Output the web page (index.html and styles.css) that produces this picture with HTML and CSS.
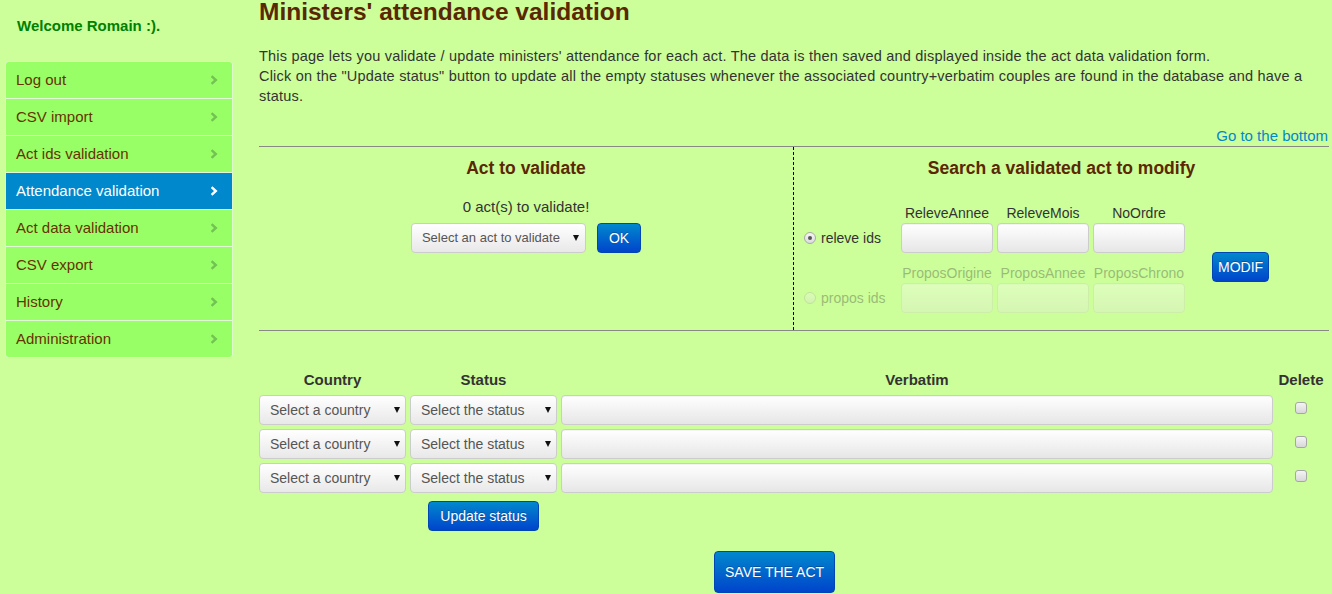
FILE: index.html
```html
<!DOCTYPE html>
<html>
<head>
<meta charset="utf-8">
<title>Ministers' attendance validation</title>
<link rel="stylesheet" href="styles.css">
</head>
<body>
<div class="layout">
  <aside class="sidebar">
    <p class="welcome">Welcome Romain :).</p>
    <ul class="nav">
      <li><a href="#">Log out<svg class="chev" width="8" height="10" viewBox="0 0 8 10"><path d="M1.6 1.2 L5.8 5 L1.6 8.8" fill="none" stroke="currentColor" stroke-width="2.4"/></svg></a></li>
      <li><a href="#">CSV import<svg class="chev" width="8" height="10" viewBox="0 0 8 10"><path d="M1.6 1.2 L5.8 5 L1.6 8.8" fill="none" stroke="currentColor" stroke-width="2.4"/></svg></a></li>
      <li><a href="#">Act ids validation<svg class="chev" width="8" height="10" viewBox="0 0 8 10"><path d="M1.6 1.2 L5.8 5 L1.6 8.8" fill="none" stroke="currentColor" stroke-width="2.4"/></svg></a></li>
      <li class="active"><a href="#">Attendance validation<svg class="chev" width="8" height="10" viewBox="0 0 8 10"><path d="M1.6 1.2 L5.8 5 L1.6 8.8" fill="none" stroke="currentColor" stroke-width="2.4"/></svg></a></li>
      <li><a href="#">Act data validation<svg class="chev" width="8" height="10" viewBox="0 0 8 10"><path d="M1.6 1.2 L5.8 5 L1.6 8.8" fill="none" stroke="currentColor" stroke-width="2.4"/></svg></a></li>
      <li><a href="#">CSV export<svg class="chev" width="8" height="10" viewBox="0 0 8 10"><path d="M1.6 1.2 L5.8 5 L1.6 8.8" fill="none" stroke="currentColor" stroke-width="2.4"/></svg></a></li>
      <li><a href="#">History<svg class="chev" width="8" height="10" viewBox="0 0 8 10"><path d="M1.6 1.2 L5.8 5 L1.6 8.8" fill="none" stroke="currentColor" stroke-width="2.4"/></svg></a></li>
      <li><a href="#">Administration<svg class="chev" width="8" height="10" viewBox="0 0 8 10"><path d="M1.6 1.2 L5.8 5 L1.6 8.8" fill="none" stroke="currentColor" stroke-width="2.4"/></svg></a></li>
    </ul>
  </aside>

  <main class="main">
    <h3 class="title">Ministers' attendance validation</h3>
    <p class="intro">This page lets you validate / update ministers' attendance for each act. The data is then saved and displayed inside the act data validation form.<br>Click on the "Update status" button to update all the empty statuses whenever the associated country+verbatim couples are found in the database and have a status.</p>
    <div class="goto"><a href="#">Go to the bottom</a></div>

    <div class="search">
      <section class="col col-left">
        <h4 class="subtitle">Act to validate</h4>
        <p class="count">0 act(s) to validate!</p>
        <div class="act-row">
          <div class="sel sel-act"><span>Select an act to validate</span><i class="caret"></i></div>
          <button class="btn btn-ok">OK</button>
        </div>
      </section>
      <section class="col col-right">
        <h4 class="subtitle">Search a validated act to modify</h4>
        <div class="ids">
          <span class="lbl r1 c2">ReleveAnnee</span>
          <span class="lbl r1 c3">ReleveMois</span>
          <span class="lbl r1 c4">NoOrdre</span>
          <label class="radio-lbl r2 c1"><span class="radio on"></span>releve ids</label>
          <span class="inp r2 c2"></span>
          <span class="inp r2 c3"></span>
          <span class="inp r2 c4"></span>
          <span class="lbl dis r4 c2">ProposOrigine</span>
          <span class="lbl dis r4 c3">ProposAnnee</span>
          <span class="lbl dis r4 c4">ProposChrono</span>
          <label class="radio-lbl dis r5 c1"><span class="radio"></span>propos ids</label>
          <span class="inp dis r5 c2"></span>
          <span class="inp dis r5 c3"></span>
          <span class="inp dis r5 c4"></span>
          <button class="btn btn-modif">MODIF</button>
        </div>
      </section>
    </div>

    <div class="attendance">
      <div class="th">Country</div>
      <div class="th">Status</div>
      <div class="th">Verbatim</div>
      <div class="th">Delete</div>

      <div class="sel"><span>Select a country</span><i class="caret"></i></div>
      <div class="sel"><span>Select the status</span><i class="caret"></i></div>
      <div class="inp"></div>
      <div class="chk-cell"><span class="chk"></span></div>

      <div class="sel"><span>Select a country</span><i class="caret"></i></div>
      <div class="sel"><span>Select the status</span><i class="caret"></i></div>
      <div class="inp"></div>
      <div class="chk-cell"><span class="chk"></span></div>

      <div class="sel"><span>Select a country</span><i class="caret"></i></div>
      <div class="sel"><span>Select the status</span><i class="caret"></i></div>
      <div class="inp"></div>
      <div class="chk-cell"><span class="chk"></span></div>

      <div class="update-cell"><button class="btn btn-update">Update status</button></div>
    </div>

    <div class="save-row"><button class="btn btn-save">SAVE THE ACT</button></div>
  </main>
</div>
</body>
</html>
```

FILE: styles.css
```css
* { box-sizing: border-box; }

body {
  margin: 0;
  background: #ccff99;
  font-family: "Liberation Sans", Arial, sans-serif;
  font-size: 14px;
  line-height: 20px;
  color: #333;
  overflow: hidden;
}

.layout {
  display: flex;
  gap: 26px;
  padding: 0 3px 0 5px;
}

/* Sidebar */
.sidebar {
  width: 228px;
  flex: none;
}

.welcome {
  margin: 16px 0 25px 12px;
  font-size: 15px;
  font-weight: bold;
  color: #008000;
}

.nav {
  list-style: none;
  margin: 0;
  padding: 0;
  border: 1px solid #def7cf;
  border-radius: 4px;
  overflow: hidden;
}

.nav a {
  display: flex;
  align-items: center;
  justify-content: space-between;
  height: 37px;
  padding: 0 14px 0 10px;
  background: #99ff66;
  color: #663300;
  font-size: 15px;
  text-decoration: none;
  border-bottom: 1px solid #e2f6d8;
}

.nav li:last-child a { border-bottom: 0; height: 36px; }

.nav .chev { color: #72c254; }

.nav .active a {
  background: #0088cc;
  color: #fff;
}

.nav .active .chev { color: #fff; }

/* Main */
.main {
  flex: 1;
  min-width: 0;
}

.title {
  margin: 0;
  font-size: 24.5px;
  line-height: 24px;
  font-weight: bold;
  color: #5a2800;
}

.intro {
  margin: 22px 0 0;
  font-size: 14.5px;
  letter-spacing: 0.21px;
}

.goto {
  margin-top: 20px;
  text-align: right;
  padding-right: 1px;
  font-size: 15px;
}

.goto a {
  color: #0088cc;
  text-decoration: none;
}

.search {
  display: grid;
  grid-template-columns: 535px 1fr;
  border-top: 1px solid #888;
  border-bottom: 1px solid #888;
}

.col-left {
  border-right: 1px dashed #000;
}

.subtitle {
  margin: 0;
  padding-top: 11px;
  font-size: 17.5px;
  line-height: 20px;
  font-weight: bold;
  text-align: center;
  color: #5a2800;
}

.count {
  margin: 19px 0 0;
  text-align: center;
  font-size: 15px;
}

.act-row {
  display: flex;
  justify-content: center;
  align-items: center;
  gap: 11px;
  margin-top: 6px;
}

/* Select look-alike */
.sel {
  display: flex;
  align-items: center;
  justify-content: space-between;
  height: 30px;
  padding: 0 5px 0 10px;
  border: 1px solid #ccc;
  border-radius: 4px;
  background: linear-gradient(#ffffff, #e8e8e8);
  color: #555;
  white-space: nowrap;
}

.sel-act {
  width: 175px;
  font-size: 13px;
  padding-right: 6px;
}

.caret {
  width: 0;
  height: 0;
  border-left: 3px solid transparent;
  border-right: 3px solid transparent;
  border-top: 6px solid #111;
}

.inp {
  display: block;
  height: 30px;
  border: 1px solid #ccc;
  border-radius: 4px;
  background: linear-gradient(#ffffff, #e6e6e6);
  box-shadow: inset 0 1px 1px rgba(0, 0, 0, 0.05);
}

/* Buttons */
.btn {
  font-family: "Liberation Sans", Arial, sans-serif;
  font-size: 14px;
  line-height: 20px;
  color: #fff;
  text-shadow: 0 -1px 0 rgba(0, 0, 0, 0.25);
  background: linear-gradient(#0088cc, #0044cc);
  border: 1px solid #0047b3;
  border-radius: 4px;
  padding: 4px 11px;
  cursor: pointer;
}

.btn-modif { padding: 4px 5px; }
.btn-update { padding: 4px 11.5px; }
.btn-save { padding: 10px 10px; }

/* Right search column */
.col-right {
  padding: 0 0 17px 0;
}

.ids {
  display: grid;
  grid-template-columns: 93px 92px 92px 92px auto;
  grid-template-rows: 20px 30px 10px 20px 30px;
  column-gap: 4px;
  margin-top: 25px;
  padding-left: 10px;
}

.lbl {
  text-align: center;
  white-space: nowrap;
}

.r1 { grid-row: 1; }
.r2 { grid-row: 2; }
.r4 { grid-row: 4; }
.r5 { grid-row: 5; }
.c1 { grid-column: 1; }
.c2 { grid-column: 2; }
.c3 { grid-column: 3; }
.c4 { grid-column: 4; }

.radio-lbl {
  display: flex;
  align-items: center;
  gap: 5px;
}

.radio {
  width: 12px;
  height: 12px;
  border-radius: 50%;
  border: 1px solid #aaa;
  background: linear-gradient(#f6f6f6, #dcdcdc);
  display: flex;
  align-items: center;
  justify-content: center;
}

.radio.on::after {
  content: "";
  width: 4px;
  height: 4px;
  border-radius: 50%;
  background: #555;
}

.dis { opacity: 0.33; }

.btn-modif {
  grid-column: 5;
  grid-row: 1 / 6;
  align-self: start;
  justify-self: start;
  margin: 49px 0 0 23px;
}

/* Attendance table */
.attendance {
  display: grid;
  grid-template-columns: 147px 147px 712px 48px;
  grid-template-rows: 21px repeat(3, 30px);
  column-gap: 4px;
  row-gap: 4px;
  margin-top: 39px;
}

.th {
  font-weight: bold;
  font-size: 15px;
  text-align: center;
  line-height: 20px;
}

.chk-cell {
  display: flex;
  justify-content: center;
  align-items: center;
  padding-bottom: 4px;
}

.chk {
  width: 12px;
  height: 12px;
  border: 1px solid #a6a6a6;
  border-radius: 3px;
  background: linear-gradient(#f4f4f4, #d8d8d8);
}

.update-cell {
  grid-column: 2;
  display: flex;
  justify-content: center;
  margin-top: 4px;
}

.save-row {
  display: flex;
  padding-left: 455px;
  margin-top: 20px;
}
```
